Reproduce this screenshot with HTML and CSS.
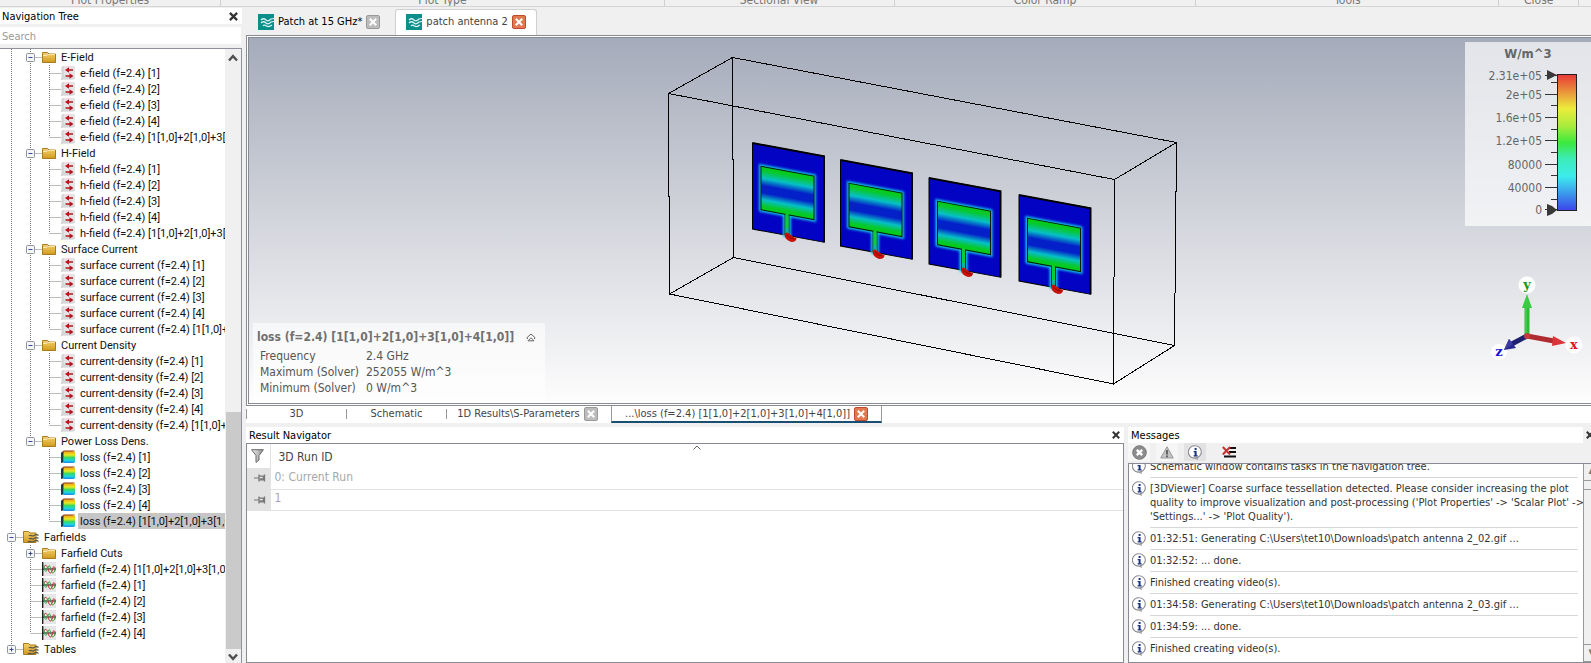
FILE: index.html
```html
<!DOCTYPE html>
<html lang="en">
<head>
<meta charset="utf-8">
<title>patch antenna 2</title>
<link rel="stylesheet" href="styles.css">
</head>
<body>
<svg class="defs" width="0" height="0" aria-hidden="true">
  <defs>
    <linearGradient id="gFolder" x1="0" y1="0" x2="0" y2="1"><stop offset="0" stop-color="#f6d16c"/><stop offset="1" stop-color="#cf9a1e"/></linearGradient>
    <linearGradient id="gLoss" x1="0" y1="0" x2="0" y2="1"><stop offset="0" stop-color="#f0a020"/><stop offset=".3" stop-color="#e8e820"/><stop offset=".55" stop-color="#30d860"/><stop offset=".75" stop-color="#20d8e0"/><stop offset="1" stop-color="#1888e8"/></linearGradient>
    <linearGradient id="gPatch" x1="0" y1="0" x2="0" y2="1"><stop offset="0" stop-color="#04cc10"/><stop offset=".1" stop-color="#06c830"/><stop offset=".27" stop-color="#06c0c8"/><stop offset=".44" stop-color="#0420c8"/><stop offset=".6" stop-color="#0420c8"/><stop offset=".76" stop-color="#06c0c8"/><stop offset=".9" stop-color="#06c830"/><stop offset="1" stop-color="#04cc10"/></linearGradient>
    <linearGradient id="gRamp" x1="0" y1="0" x2="0" y2="1"><stop offset="0" stop-color="#e83838"/><stop offset=".25" stop-color="#ecec3c"/><stop offset=".38" stop-color="#a8ec3c"/><stop offset=".5" stop-color="#3ce83c"/><stop offset=".62" stop-color="#3cecb8"/><stop offset=".75" stop-color="#3cecec"/><stop offset="1" stop-color="#3c44ec"/></linearGradient>
    <linearGradient id="gFunnel" x1="0" y1="0" x2="1" y2="0"><stop offset="0" stop-color="#f4f4f4"/><stop offset="1" stop-color="#8c8c8c"/></linearGradient>
    <filter id="glow" x="-30%" y="-30%" width="160%" height="160%"><feGaussianBlur stdDeviation="1.2"/></filter>

    <symbol id="folder" viewBox="0 0 14 14"><path d="M.5 12.500V2.500h5l1.500 1.500h6.500v8.500z" fill="url(#gFolder)" stroke="#a87b18"/><path d="M1 5.500h4l1-1h7" fill="none" stroke="#fbe6a4"/></symbol>
    <symbol id="field" viewBox="0 0 14 14"><path d="M0 1.500 2 0h12v12l-2 2H0z" fill="#e4e4e6"/><path d="M2 0v12l-2 2M2 12h12" fill="none" stroke="#cacace"/><path d="M4 4l4-2.800v2h4v1.600H8v2zM12.500 10l-4-2.800v2h-4v1.600h4v2z" fill="#b81418"/></symbol>
    <symbol id="loss" viewBox="0 0 15 15"><path d="M0 3 3 1v12l-3 1z" fill="#123c48"/><path d="M0 3 3 .5h12l-2 1.500z" fill="#8c3c10"/><path d="M3 1.500h12v11.500l-2 1H2.500z" fill="url(#gLoss)"/></symbol>
    <symbol id="farfield" viewBox="0 0 14 14"><rect x="1" width="13" height="14" fill="#e6e6e8"/><path d="M.7 0v14" stroke="#222" stroke-width="1.400"/><path d="M0 7h14" stroke="#111"/><path d="M1.500 7c1-5 3-5 4.500 0s3 5 4 2 1-5 2.500-4 1 4-.5 4.500" fill="none" stroke="#c03030"/><path d="M1.500 3c1 6 2 8 3.500 5S7 1 8.500 6s2 6 3.500 4 1-3 1.500-4" fill="none" stroke="#2ca83c"/></symbol>
    <symbol id="farfolder" viewBox="0 0 16 14"><path d="M.5 12.500V1.500h5l1.500 1.500h6v9.500z" fill="url(#gFolder)" stroke="#a87b18"/><path d="M6 6c1.500-2 3 1 5-.5s3-1.500 4.500 0M6 9c1.500-2 3 1 5-.5s3-1.500 4.500 0M5 12c2-2 3 1 5.500-.5s3-1.500 5 0" fill="none" stroke="#5a564c" stroke-width="1.200"/></symbol>
    <symbol id="project" viewBox="0 0 16 16"><rect width="16" height="16" fill="#0b8f8b"/><path d="M3 6c2-2 3.500-1.500 5 0s3 1 5-1l3-.5M3 9c2-2 3.500-1.500 5 0s3 1 5-1l3-.5M5 12c1-1.500 2-1 3.500 0S12 12.500 14 11" fill="none" stroke="#d8f4f2" stroke-width="1.200"/></symbol>
    <symbol id="x" viewBox="0 0 8 8"><path d="M.8.8l6.400 6.400M7.200.8L.8 7.200" fill="none" stroke="currentColor" stroke-width="2"/></symbol>
    <symbol id="info" viewBox="0 0 15 15"><path d="M7.500.8a6.300 6.100 0 1 1-1.500 12.100q1.500 1 4 1.200" fill="#fff" stroke="#8a8a92" stroke-width="1.100"/><path d="M6 13.100A6.300 6.100 0 0 1 7.500.8" fill="#fff" stroke="#8a8a92" stroke-width="1.100"/><path d="M6.600 3h2v2h-2zM5.600 6h3v4.200h1v1.200h-4v-1.200h1V7.200h-1z" fill="#1c3484"/></symbol>
    <symbol id="pin" viewBox="0 0 12 8"><path d="M0 4h5" stroke="#777"/><path d="M5 .5v7M5 2.200h4.500v3.600H5M10.500 .5v7" fill="none" stroke="#777" stroke-width="1.300"/><path d="M6 5h4" stroke="#777" stroke-width="1.500"/></symbol>
    <symbol id="up" viewBox="0 0 8 8"><path d="M.8 6 4 2.500 7.200 6" fill="none" stroke="#505050" stroke-width="1.900"/></symbol>
    <symbol id="down" viewBox="0 0 8 8"><path d="M.8 2 4 5.500 7.200 2" fill="none" stroke="#505050" stroke-width="1.900"/></symbol>
    <g id="antenna">
      <g transform="skewY(10.5)">
        <rect width="71.500" height="86" fill="#0303c4" stroke="#000"/>
        <path d="M0 0h71.500v86" fill="none" stroke="#000" stroke-width="2"/>
        <path d="M8.500 21.700h53v43.500H36.500V86h-4V65.200h-24z" fill="#0ac" stroke="#14c8e8" stroke-width="4" filter="url(#glow)"/>
        <rect x="8.500" y="21.700" width="53" height="43.500" fill="url(#gPatch)" stroke="#001c08"/>
        <path d="M32.500 65v21M36.500 65v21" stroke="#043c10"/>
        <rect x="33" y="64" width="3" height="15" fill="#08cc38"/>
        <rect x="33" y="79" width="3" height="7" fill="#10b0a0"/>
      </g>
      <path d="M32 91q2-3 5 0t7 4q0 4-5 4-7-2-7-8z" fill="#c81008"/><path d="M34 92q4 4 8 4" fill="none" stroke="#8c0804"/>
    </g>
  </defs>
</svg>

<div class="ribbon">
  <span class="group g1">Plot Properties</span><span class="group g2">Plot Type</span><span class="group g3">Sectional View</span><span class="group g4">Color Ramp</span><span class="group g5">Tools</span><span class="group g6">Close</span><span class="group g7"></span>
</div>

<div class="app">
  <aside class="nav">
    <header class="title"><h2>Navigation Tree</h2><button class="plain" aria-label="Close navigation tree"><svg width="9" height="9"><use href="#x"/></svg></button></header>
    <input class="search" type="text" placeholder="Search" aria-label="Search">
    <div class="treebox">
      <ul class="tree" id="tree"></ul>
      <div class="scroll"><svg width="10" height="10"><use href="#up"/></svg><div class="thumb"></div><svg width="10" height="10"><use href="#down"/></svg></div>
    </div>
  </aside>

  <main class="main">
    <nav class="doctabs">
      <div class="doctab"><svg width="16" height="16"><use href="#project"/></svg><span>Patch at 15 GHz*</span><button class="close" aria-label="Close Patch at 15 GHz"><svg width="8" height="8"><use href="#x"/></svg></button></div>
      <div class="doctab active"><svg width="16" height="16"><use href="#project"/></svg><span>patch antenna 2</span><button class="close hot" aria-label="Close patch antenna 2"><svg width="8" height="8"><use href="#x"/></svg></button></div>
    </nav>

    <section class="view">
      <div class="canvas">
        <svg class="scene" width="512" height="334" viewBox="666 54 512 334">
          <g fill="none" stroke="#000" shape-rendering="crispEdges">
            <path d="M732.500 57.500 1176.500 142.500 1174.500 345.500 733.500 257.500z"/>
            <path d="M668.500 93.500 1114.500 179.500 1113.500 384 669.500 294z"/>
            <path d="M732.500 57.500 668.500 93.500M1176.500 142.500 1114.500 179.500M1174.500 345.500 1113.500 384M733.500 257.500 669.500 294"/>
          </g>
          <use href="#antenna" x="752.500" y="143"/><use href="#antenna" x="840.500" y="160"/><use href="#antenna" x="929" y="178"/><use href="#antenna" x="1019" y="195"/>
        </svg>
        <svg class="legend" width="126" height="184">
          <text class="unit" x="63" y="16" text-anchor="middle">W/m^3</text>
          <g class="scale" text-anchor="end"><text x="77" y="38">2.31e+05</text><text x="77" y="57">2e+05</text><text x="77" y="80">1.6e+05</text><text x="77" y="103">1.2e+05</text><text x="77" y="127">80000</text><text x="77" y="150">40000</text><text x="77" y="172">0</text></g>
          <path d="M80 33.500h12M80 52.500h12M80 75.500h12M80 98.500h12M80 122.500h12M80 145.500h12M80 167.500h12M86 40.500h6M86 63.500h6M86 87.500h6M86 110.500h6M86 133.500h6M86 157.500h6" stroke="#333"/>
          <rect x="92.500" y="32.500" width="19" height="136" fill="url(#gRamp)" stroke="#222"/>
          <path d="M82 28l10 5-10 5zM82 162l5 2 5 4-5 4-5 2z" fill="#383838"/>
        </svg>
        <svg class="triad" width="104" height="88" viewBox="1487 273 104 88">
          <circle cx="1527" cy="285" r="8.500" fill="#fff"/><circle cx="1574" cy="345" r="8.500" fill="#fff"/><circle cx="1499" cy="352" r="8" fill="#fff"/>
          <path d="M1527 337v-32" stroke="#30b838" stroke-width="5"/><path d="M1526 337v-32" stroke="#58d860"/><path d="M1522 308l5-14 5 14z" fill="#38cc40"/>
          <path d="M1527 336 1508 346" stroke="#202070" stroke-width="5"/><path d="M1504 350l5-11 7 9z" fill="#28288c"/><path d="M1504 350l5-11 4 5z" fill="#3c3ca4"/>
          <path d="M1527 336 1554 341" stroke="#b02c30" stroke-width="5"/><path d="M1553 336l13 7-14 3z" fill="#dc3438"/><circle cx="1527" cy="336" r="3" fill="#c83c3c"/>
          <g class="axis" text-anchor="middle"><text x="1527" y="289" fill="#109818">y</text><text x="1574" y="349" fill="#e01418">x</text><text x="1499" y="356" fill="#1414d8">z</text></g>
        </svg>
        <div class="plotinfo">
          <h3>loss (f=2.4) [1[1,0]+2[1,0]+3[1,0]+4[1,0]] <svg width="10" height="9" viewBox="0 0 10 9"><path d="M.8 4.800 5 1l4.200 3.800M2 7.800 5 4.800l3 3zM.8 4.800 2 6M9.200 4.800 8 6" fill="none" stroke="#666"/></svg></h3>
          <dl><dt>Frequency</dt><dd>2.4 GHz</dd><dt>Maximum (Solver)</dt><dd>252055 W/m^3</dd><dt>Minimum (Solver)</dt><dd>0 W/m^3</dd></dl>
        </div>
      </div>
    </section>

    <nav class="viewtabs">
      <button class="vt">3D</button><button class="vt">Schematic</button>
      <div class="vt wide"><span>1D Results\S-Parameters</span><button class="close" aria-label="Close 1D Results"><svg width="8" height="8"><use href="#x"/></svg></button></div>
      <div class="vt active"><span>...\loss (f=2.4) [1[1,0]+2[1,0]+3[1,0]+4[1,0]]</span><button class="close hot" aria-label="Close loss plot"><svg width="8" height="8"><use href="#x"/></svg></button></div>
    </nav>

    <div class="docks">
      <section class="results">
        <header class="title"><h2>Result Navigator</h2><button class="plain" aria-label="Close result navigator"><svg width="8" height="8"><use href="#x"/></svg></button></header>
        <div class="gridbox">
          <svg class="sort" width="8" height="5" viewBox="0 0 8 5"><path d="M.5 4.500 4 1l3.500 3.500" fill="none" stroke="#666"/></svg>
          <table>
            <thead><tr><th class="mark"><svg width="13" height="14" viewBox="0 0 13 14"><path d="M.6.7h11.800L8 6.500V11l-3 2.400V6.500z" fill="url(#gFunnel)" stroke="#666"/></svg></th><th>3D Run ID</th></tr></thead>
            <tbody><tr><td class="mark"><svg width="12" height="8"><use href="#pin"/></svg></td><td>0: Current Run</td></tr><tr><td class="mark"><svg width="12" height="8"><use href="#pin"/></svg></td><td>1</td></tr></tbody>
          </table>
        </div>
      </section>
      <section class="messages">
        <header class="title"><h2>Messages</h2><button class="plain" aria-label="Close messages"><svg width="8" height="8"><use href="#x"/></svg></button></header>
        <div class="tools">
          <button aria-label="Errors"><svg width="15" height="15" viewBox="0 0 15 15"><circle cx="7.500" cy="7.500" r="6.800" fill="#8c8c8c" stroke="#777"/><path d="M4.800 4.800l5.400 5.400M10.200 4.800l-5.400 5.400" stroke="#fff" stroke-width="2.400"/></svg></button>
          <button aria-label="Warnings"><svg width="14" height="13" viewBox="0 0 14 13"><path d="M7 .8 13.300 12H.7z" fill="#c4c4c4" stroke="#999"/><path d="M7 4v4.500M7 9.500v1.700" stroke="#444" stroke-width="1.500"/></svg></button>
          <button class="on" aria-label="Information"><svg width="15" height="15"><use href="#info"/></svg></button>
          <button aria-label="Clear messages"><svg width="14" height="12" viewBox="0 0 14 12"><path d="M7 2h7M7 6h7M2 10.500h12" stroke="#111" stroke-width="2"/><path d="M.8 1 8 8.500M8 1 .8 8.500" stroke="#c03438" stroke-width="2"/></svg></button>
        </div>
        <div class="msgbox">
          <ol class="log">
            <li><svg width="15" height="15"><use href="#info"/></svg><p>Schematic window contains tasks in the navigation tree.</p></li>
            <li><svg width="15" height="15"><use href="#info"/></svg><p>[3DViewer] Coarse surface tessellation detected. Please consider increasing the plot<br>quality to improve visualization and post-processing ('Plot Properties' -&gt; 'Scalar Plot' -&gt;<br>'Settings...' -&gt; 'Plot Quality').</p></li>
            <li><svg width="15" height="15"><use href="#info"/></svg><p>01:32:51: Generating C:\Users\tet10\Downloads\patch antenna 2_02.gif ...</p></li>
            <li><svg width="15" height="15"><use href="#info"/></svg><p>01:32:52: ... done.</p></li>
            <li><svg width="15" height="15"><use href="#info"/></svg><p>Finished creating video(s).</p></li>
            <li><svg width="15" height="15"><use href="#info"/></svg><p>01:34:58: Generating C:\Users\tet10\Downloads\patch antenna 2_03.gif ...</p></li>
            <li><svg width="15" height="15"><use href="#info"/></svg><p>01:34:59: ... done.</p></li>
            <li><svg width="15" height="15"><use href="#info"/></svg><p>Finished creating video(s).</p></li>
          </ol>
          <div class="msgscroll"><span>▴</span><div></div><span>▾</span></div>
        </div>
      </section>
    </div>
  </main>
</div>
<script src="tree.js"></script>
</body>
</html>
```
FILE: styles.css
```css
* { box-sizing: border-box; }
body { margin: 0; height: 100vh; display: flex; flex-direction: column; overflow: hidden; background: #f0f0f0; color: #333; font: 11px/14px "DejaVu Sans Condensed", "Noto Sans", sans-serif; }
svg { display: block; flex: none; }
.defs { position: absolute; }
h2, h3, p, ul, ol, dl, dd { margin: 0; padding: 0; }
h2 { font-size: 11px; font-weight: 400; line-height: 16px; color: #000; }
button { padding: 0; border: 0; background: none; font: inherit; color: inherit; }

.ribbon { display: flex; flex: none; height: 7px; overflow: hidden; border-bottom: 1px solid #d4d4d4; color: #777; font-size: 12px; }
.group { display: flex; align-items: flex-end; justify-content: center; height: 7px; line-height: 14px; border-right: 1px solid #d0d0d0; }
.g1 { flex: 221; } .g2 { flex: 444; } .g3 { flex: 230; } .g4 { flex: 302; } .g5 { flex: 303; } .g6 { flex: 79; } .g7 { flex: 12; border: 0; }

.app { display: flex; flex: 1; min-height: 0; }
.nav { display: flex; flex-direction: column; width: 242px; flex: none; padding-top: 1px; }
.title { display: flex; align-items: center; justify-content: space-between; height: 16px; flex: none; padding: 0 4px 0 2px; background: #fff; color: #333; }
.title h2 { padding-top: 1px; }
.search { height: 17px; flex: none; margin: 3px 1px 4px 0; padding: 2px 2px 0; border: 0; background: #fff; font: inherit; color: #333; }
.search::placeholder { color: #999; opacity: 1; }
.treebox { display: flex; flex: 1; min-height: 0; background: #fff; border: solid #8f9399; border-width: 1px 1px 0 0; }
.tree { flex: 1; min-width: 0; overflow: hidden; list-style: none; color: #111; font: 11px/16px Roboto, "Liberation Sans", sans-serif; }
.tree li { display: flex; align-items: center; height: 16px; white-space: nowrap; }
.tree .label { height: 16px; padding: 1px 2px 0; flex: 1; overflow: hidden; line-height: 15px; }
.tree .selected { background: #c6c6c6; }
.scroll { display: flex; flex-direction: column; align-items: center; width: 16px; padding: 4px 0 1px; background: #f0f0f0; }
.thumb { width: 15px; margin: auto 0 3px; height: 39%; background: #cacaca; }

.main { display: flex; flex-direction: column; flex: 1; min-width: 0; margin-left: 4px; }
.doctabs { display: flex; flex: none; height: 28px; padding: 2px 0 0 5px; color: #000; }
.doctab { display: flex; align-items: center; gap: 4px; padding: 0 15px 0 7px; }
.doctab svg + span { white-space: nowrap; }
.doctab.active { padding: 0 10px 2px; background: #fff; border: solid #cfcfcf; border-width: 1px 1px 0; border-radius: 3px 3px 0 0; color: #444; }
.close { display: flex; align-items: center; justify-content: center; flex: none; width: 14px; height: 14px; border: 1px solid #999; border-radius: 2px; background: #bcbcbc; color: #fff; }
.close.hot { border-color: #c04a30; background: #e07850; }

.view { flex: 1; min-height: 0; border: solid #888c92; border-width: 1px 0 1px 1px; padding: 1px 0 1px 1px; background: #fff; }
.canvas { position: relative; display: flex; align-items: center; justify-content: center; height: 100%; padding-left: 4px; overflow: hidden; border: solid #888c92; border-width: 1px 0 1px 1px; background: linear-gradient(#a4abba, #d3d5dc 50%, #fdfdfd); }
.legend { position: absolute; top: 4px; right: 0; background: rgba(255,255,255,.68); fill: #666; }
.unit { font: bold 13px "DejaVu Sans Condensed", sans-serif; }
.scale { font: 12px "DejaVu Sans Condensed", sans-serif; }
.triad { position: absolute; right: 0; bottom: 42px; }
.axis { font: bold 13px "DejaVu Serif", serif; }
.plotinfo { position: absolute; left: 4px; bottom: 0; width: 292px; height: 80px; padding: 5px 4px; background: rgba(255,255,255,.6); color: #555; font-size: 12px; }
.plotinfo h3 { display: flex; align-items: center; gap: 12px; font-size: 12px; line-height: 18px; color: #707070; white-space: nowrap; }
.plotinfo dl { display: grid; grid-template-columns: 106px 1fr; padding: 2px 3px; line-height: 16px; white-space: nowrap; }

.viewtabs { display: flex; flex: none; height: 17px; background: #fff; }
.vt { display: flex; align-items: center; justify-content: center; gap: 4px; width: 100px; height: 10px; margin-top: 3px; border-left: 1px solid #999; white-space: nowrap; color: #444; }
.vt.wide { width: 165px; padding-right: 3px; }
.vt.active { width: 271px; height: 17px; margin: 0; padding: 0; border: solid #999; border-width: 0 1px; border-bottom: 2px solid #1a4f74; background: #fff; }

.docks { display: flex; flex: none; height: 240px; padding-top: 4px; gap: 4px; }
.results { display: flex; flex-direction: column; flex: 878; min-width: 0; }
.results .title, .messages .title { padding-left: 3px; }
.gridbox { position: relative; flex: 1; border: 1px solid #888c92; background: #fff; }
.sort { position: absolute; left: 50%; top: 1px; margin-left: 8px; }
table { width: 100%; border-collapse: collapse; font-size: 12px; line-height: 16px; color: #a8a8a8; }
th { height: 24px; padding: 2px 8px 0; text-align: left; font-weight: 400; color: #444; }
td { height: 21px; padding: 0 4px 3px; border-bottom: 1px solid #e2e2e2; }
.mark { width: 23px; padding: 0 4px; border-right: 1px solid #e2e2e2; }
td.mark { padding: 0 0 0 7px; background: #e2e2e2; }
.messages { display: flex; flex-direction: column; flex: 463; min-width: 0; }
.messages .title { padding-right: 0; background: linear-gradient(to right, #fff calc(100% - 8px), #f0f0f0 0); }
.messages .title .plain { margin-right: -3px; }
.tools { display: flex; gap: 6px; height: 20px; flex: none; }
.tools button { display: flex; align-items: center; justify-content: center; width: 22px; height: 18px; background: #f6f6f6; }
.tools .on { background: #e2e2e2; }
.tools button:last-child { margin-left: 6px; background: none; }
.msgbox { display: flex; flex: 1; min-height: 0; border: solid #888c92; border-width: 1px 0 1px 1px; background: #fff; }
.log { display: flex; flex-direction: column; justify-content: flex-end; flex: 1; min-width: 0; overflow: hidden; padding: 0 5px 2px 3px; list-style: none; white-space: nowrap; }
.log li { display: flex; align-items: flex-start; gap: 3px; flex: none; }
.log svg { margin-top: 3px; }
.log p { flex: 1; min-width: 0; padding: 4px 0 3px; border-bottom: 1px solid #d8d8d8; }
.log li:last-child p { border-color: transparent; }
.msgscroll { display: flex; flex-direction: column; flex: none; width: 8px; overflow: hidden; border-left: 1px solid #999; background: #f0f0f0; color: #777; }
.msgscroll span { width: 14px; height: 17px; text-align: center; border-bottom: 1px solid #999; }
.msgscroll div { flex: 1; margin-top: 8px; border: solid #999; border-width: 1px 0; }
```
FILE: tree.js
```js
const combo = "[1[1,0]+2[1,0]+3[1,0]+4[1,0]]";
const runs = ["[1]", "[2]", "[3]", "[4]", combo];
const rows = [];
function folder(title, name, icon) {
  rows.push({ depth: 1, icon: "folder", text: title, box: "-" });
  runs.forEach((run, i) => rows.push({
    depth: 2, icon, text: `${name} (f=2.4) ${run}`, last: i === 4,
    lastGroup: title === "Power Loss Dens.", selected: icon === "loss" && i === 4
  }));
}
folder("E-Field", "e-field", "field");
folder("H-Field", "h-field", "field");
folder("Surface Current", "surface current", "field");
folder("Current Density", "current-density", "field");
folder("Power Loss Dens.", "loss", "loss");
rows.find(r => r.text === "Power Loss Dens.").last = true;
rows.push({ depth: 0, icon: "farfolder", text: "Farfields", box: "-" });
rows.push({ depth: 1, icon: "folder", text: "Farfield Cuts", box: "+" });
[combo, ...runs.slice(0, 4)].forEach((run, i) =>
  rows.push({ depth: 1, icon: "farfield", text: "farfield (f=2.4) " + run, last: i === 4 }));
rows.push({ depth: 0, icon: "farfolder", text: "Tables", box: "+", last: true });

document.getElementById("tree").innerHTML = rows.map(r => {
  const width = 23 + 19 * r.depth;
  const x = 11.5 + 19 * r.depth;
  let lines = "";
  for (let d = 0; d < r.depth; d++) {
    if (d === 1 && r.lastGroup) continue;
    lines += `M${11.5 + 19 * d} 0v16`;
  }
  lines += `M${x} 0v${r.last ? 8 : 16}M${x} 8.5H${width}`;
  const box = r.box
    ? `<rect x="${x - 4}" y="4.500" width="8" height="8" rx="1" fill="#f6f6f8" stroke="#8e949c"/><path d="M${x - 2} 8.500h4${r.box === "+" ? `M${x} 6.500v4` : ""}" stroke="#34489c"/>`
    : "";
  const size = r.icon === "farfolder" ? 16 : 14;
  return `<li><svg width="${width}" height="16"><path d="${lines}" fill="none" stroke="#777" stroke-dasharray="1 1"/>${box}</svg><svg width="${size}" height="14"><use href="#${r.icon}"/></svg><svg width="3" height="1"></svg><span class="label${r.selected ? " selected" : ""}">${r.text}</span></li>`;
}).join("");
```
